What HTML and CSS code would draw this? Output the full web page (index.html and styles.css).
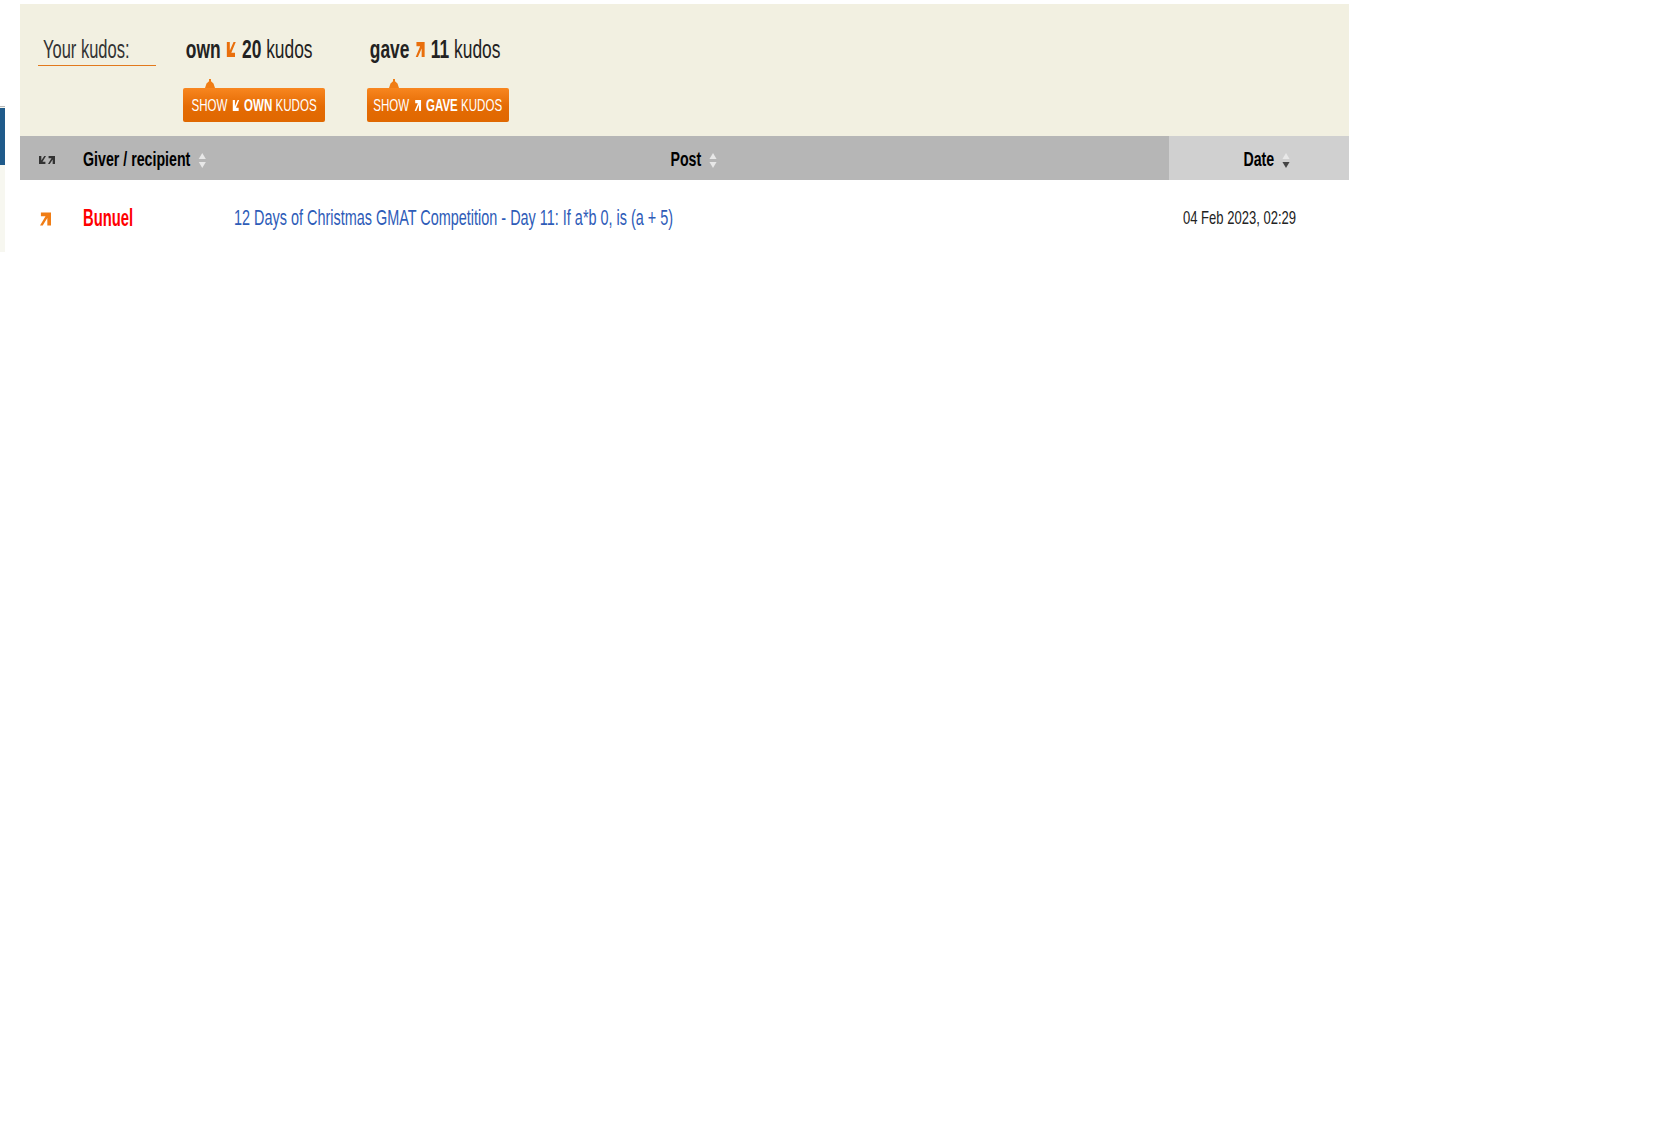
FILE: index.html
```html
<!DOCTYPE html>
<html lang="en">
<head>
  <meta charset="UTF-8" />
  <title>Kudos</title>
  <link rel="stylesheet" href="styles.css">
</head>
<body>
  <svg class="icon-defs" width="0" height="0">
    <symbol id="arrow-out" viewBox="0 0 12 14">
      <path d="M1 0h11v14h-4v-8l-5 8h-3l6-10h-5z"/>
    </symbol>
    <symbol id="arrow-in" viewBox="0 0 12 14">
      <path d="M11 14h-11v-14h4v8l5-8h3l-6 10h5z"/>
    </symbol>
  </svg>

  <div class="page">
    <div class="side-strip">
      <div class="side-blue"></div>
    </div>

    <div class="content">
      <!-- kudos summary -->
      <div class="kudos-panel">
        <div class="kudos-label"><span class="narrow label-text">Your kudos:</span></div>
        <div class="kudos-col kudos-own">
          <div class="kudos-count narrow">
            <b>own</b> <svg class="arrow arrow-big"><use href="#arrow-in"/></svg> <b>20</b> kudos
          </div>
          <a class="kudos-btn" href="#"><span class="btn-text">SHOW <svg class="arrow arrow-btn"><use href="#arrow-in"/></svg> <b>OWN</b> KUDOS</span></a>
        </div>
        <div class="kudos-col kudos-gave">
          <div class="kudos-count narrow">
            <b>gave</b> <svg class="arrow arrow-big"><use href="#arrow-out"/></svg> <b>11</b> kudos
          </div>
          <a class="kudos-btn" href="#"><span class="btn-text">SHOW <svg class="arrow arrow-btn"><use href="#arrow-out"/></svg> <b>GAVE</b> KUDOS</span></a>
        </div>
      </div>

      <table class="kudos-table">
        <thead>
          <tr>
            <th class="col-dir">
              <svg class="arrow arrow-head"><use href="#arrow-in"/></svg><svg class="arrow arrow-head"><use href="#arrow-out"/></svg>
            </th>
            <th class="col-giver"><span class="narrow">Giver / recipient <span class="sort"><i class="up"></i><i class="down"></i></span></span></th>
            <th class="col-post"><span class="narrow">Post <span class="sort"><i class="up"></i><i class="down"></i></span></span></th>
            <th class="col-date"><span class="narrow">Date <span class="sort"><i class="up"></i><i class="down active"></i></span></span></th>
          </tr>
        </thead>
        <tbody>
          <tr>
            <td class="col-dir"><svg class="arrow arrow-row"><use href="#arrow-out"/></svg></td>
            <td class="col-giver"><a class="user narrow" href="#">Bunuel</a></td>
            <td class="col-post"><a class="post-link narrow" href="#">12 Days of Christmas GMAT Competition - Day 11: If a*b 0, is (a + 5)</a></td>
            <td class="col-date"><span class="date-text narrow">04 Feb 2023, 02:29</span></td>
          </tr>
        </tbody>
      </table>
    </div>
  </div>
</body>
</html>
```

FILE: styles.css
```css
* {
  box-sizing: border-box;
}

body {
  margin: 0;
  background: #fff;
  color: #222;
  font-family: "Liberation Sans", Arial, sans-serif;
}

.icon-defs {
  display: block;
  height: 0;
}

a {
  text-decoration: none;
}

/* the source text is very condensed, no installed font is that narrow */
.narrow {
  display: inline-block;
  transform: scaleX(0.71);
  transform-origin: left center;
  white-space: nowrap;
}

.page {
  display: flex;
  align-items: flex-start;
}

.side-strip {
  width: 5px;
  height: 146px;
  margin-top: 106px;
  border-top: 1px solid #b9b9b9;
  background: #f7f7f0;
}

.side-blue {
  height: 57px;
  margin-top: 1px;
  background: #1f5a8a;
}

.content {
  width: 1329px;
  margin: 4px 0 0 15px;
}

.arrow {
  display: inline-block;
  fill: #e96f0c;
  vertical-align: middle;
}

/* kudos summary */
.kudos-panel {
  display: flex;
  align-items: flex-start;
  height: 132px;
  padding: 32px 0 0 18px;
  background: #f2f0e1;
}

.kudos-label {
  width: 118px;
  height: 30px;
  margin-right: 27px;
  padding-left: 5px;
  border-bottom: 1px solid #e2791c;
  color: #333;
  font-size: 25px;
  line-height: 27px;
  white-space: nowrap;
}

.label-text {
  transform: scaleX(0.66);
}

.kudos-col {
  width: 184px;
}

.kudos-count {
  display: block;
  height: 52px;
  padding-left: 4px;
  font-size: 25px;
  line-height: 26px;
  color: #222;
  transform: scaleX(0.695);
}

.arrow-big {
  width: 17px;
  height: 15px;
  margin-top: -3px;
}

.kudos-btn {
  position: relative;
  display: flex;
  justify-content: center;
  width: 142px;
  height: 34px;
  border-radius: 2px;
  background: linear-gradient(#f8861f, #e46b04 55%, #e06800);
  color: #fff;
  font-size: 17px;
  line-height: 35px;
}

.kudos-btn::before {
  content: "";
  position: absolute;
  left: 22px;
  top: -9px;
  width: 10px;
  height: 9px;
  background: #f07d15;
  clip-path: polygon(40% 0, 60% 0, 60% 25%, 85% 50%, 100% 100%, 0 100%, 15% 50%, 40% 25%);
}

.btn-text {
  flex: none;
  transform: scaleX(0.68);
  white-space: nowrap;
}

.arrow-btn {
  width: 15px;
  height: 11px;
  margin-top: -2px;
  fill: #fff;
}

/* table */
.kudos-table {
  width: 100%;
  border-collapse: collapse;
  table-layout: fixed;
}

.kudos-table th {
  height: 44px;
  padding: 2px 0 0;
  background: #b6b6b6;
  color: #000;
  font-size: 20px;
  font-weight: bold;
}

.kudos-table td {
  height: 72px;
  padding: 4px 0 0;
  vertical-align: middle;
}

.col-dir {
  width: 63px;
  padding-left: 20px !important;
  text-align: left;
}

.kudos-table th.col-dir {
  padding-left: 19px !important;
}

.col-giver {
  width: 151px;
  text-align: left;
}

.col-post {
  text-align: left;
}

.kudos-table th.col-post {
  padding-right: 17px;
  text-align: center;
}

.kudos-table th.col-post .narrow,
.kudos-table th.col-date .narrow {
  transform-origin: center;
}

.kudos-table th.col-date {
  width: 180px;
  padding-left: 14px;
  background: #d0d0d0;
  text-align: center;
}

td.col-date {
  padding-left: 14px !important;
  color: #222;
  font-size: 19px;
}

.date-text {
  transform: scaleX(0.686);
}

.arrow-head {
  width: 7px;
  height: 12px;
  margin-right: 2px;
  fill: #333;
}

.arrow-row {
  width: 11px;
  height: 16px;
  fill: #f07d15;
}

.sort {
  display: inline-block;
  width: 10px;
  margin-left: 6px;
  vertical-align: middle;
}

.sort i {
  display: block;
  width: 0;
  height: 0;
  border-left: 5px solid transparent;
  border-right: 5px solid transparent;
}

.sort .up {
  margin-bottom: 3px;
  border-bottom: 6px solid #e8e8e8;
}

.sort .down {
  border-top: 6px solid #e8e8e8;
}

.sort .down.active {
  border-top-color: #444;
}

.user {
  color: #f00;
  font-size: 23px;
  font-weight: bold;
  transform: scaleX(0.644);
}

.post-link {
  color: #2e5cb8;
  font-size: 22px;
  transform: scaleX(0.656);
}
```
